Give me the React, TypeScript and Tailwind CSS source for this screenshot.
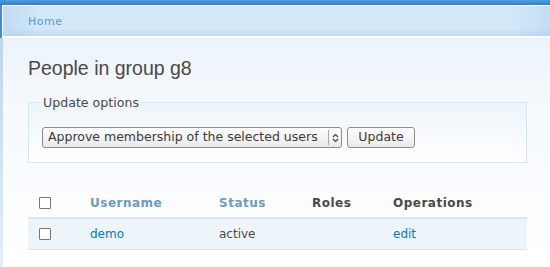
const rows = [{ name: "demo", status: "active", roles: "", op: "edit" }];

const cols = "grid grid-cols-[62px_129px_93px_81px_1fr]";

function Checkbox() {
	return <span className="block h-[12px] w-[12px] rounded-[1px] border border-[#777] bg-white" />;
}

export default function App() {
	return (
		<div className="flex h-[267px] w-[550px] flex-col overflow-hidden bg-white font-['DejaVu_Sans',sans-serif] text-[12px] text-[#494949]">
			<div className="h-[5px] bg-gradient-to-b from-[#4d9de2] to-[#2c80d2]" />
			<div className="flex h-[33px]">
				<div className="w-[2px] bg-[#3b8bd9]" />
				<div className="flex flex-1 border-t border-l border-b-2 border-white bg-[linear-gradient(90deg,#c0dbf2_0px,#d3e8f7_40px,#d3e8f7_510px,#bfdcf3_550px)]">
					<div className="flex flex-1 items-center bg-[linear-gradient(180deg,rgba(255,255,255,0)_75%,rgba(170,200,240,0.45)_100%)] pl-[25px] pt-[2px]">
						<a className="text-[11px] tracking-[0.5px] text-[#5799d3]">Home</a>
					</div>
				</div>
			</div>
			<div className="flex flex-1">
				<div className="w-[3px] bg-gradient-to-b from-[#bcd6ee] to-[#e4eef8]" />
				<div className="flex-1 bg-gradient-to-b from-[#ebf3fa] via-[#f6f9fd] via-30% to-white pl-[25px] pr-[20px]">
					<h2 className="mt-[18px] font-['Liberation_Sans',Arial,sans-serif] text-[19.5px] leading-[24px] text-[#494949]">
						People in group g8
					</h2>
					<fieldset className="mt-[16px] h-[67px] w-[499px] border border-[#d4e5f3] bg-gradient-to-b from-[#edf4fa] to-white px-[13px]">
						<legend className="px-[1px] text-[12.6px] leading-[13px] text-[#494949]">Update options</legend>
						<div className="mt-[18px] flex gap-[5px]">
							<div className="flex h-[21px] w-[300px] items-center rounded-[3px] border border-[#8c8c8c] bg-gradient-to-b from-white to-[#e9e9e9] text-[12.5px]">
								<span className="flex-1 pl-[5px] text-[#3a3a3a]">Approve membership of the selected users</span>
								<span className="h-[15px] w-px bg-[#a8a8a8]" />
								<span className="flex w-[12px] justify-center">
									<svg width="7" height="10" viewBox="0 0 7 10" fill="none" stroke="#444" strokeWidth="1.2">
										<path d="M1 4 L3.5 1.5 L6 4" />
										<path d="M1 6 L3.5 8.5 L6 6" />
									</svg>
								</span>
							</div>
							<button className="h-[21px] w-[68px] rounded-[3px] border border-[#8c8c8c] bg-gradient-to-b from-white to-[#e9e9e9] text-[12.5px] text-[#3a3a3a]">
								Update
							</button>
						</div>
					</fieldset>
					<div className="mt-[26px] w-[499px]">
						<div className={`${cols} h-[30px] items-center border-b-2 border-[#d3e7f4] font-bold tracking-[0.5px]`}>
							<span className="pl-[11px]"><Checkbox /></span>
							<span className="text-[#6b9ac4]">Username</span>
							<span className="text-[#6b9ac4]">Status</span>
							<span>Roles</span>
							<span>Operations</span>
						</div>
						{rows.map((r) => (
							<div key={r.name} className={`${cols} h-[31px] items-center border-b border-[#d3e7f4] bg-[#edf5fa]`}>
								<span className="pl-[11px]"><Checkbox /></span>
								<a className="text-[#027ac6]">{r.name}</a>
								<span>{r.status}</span>
								<span>{r.roles}</span>
								<a className="text-[#027ac6]">{r.op}</a>
							</div>
						))}
					</div>
				</div>
			</div>
		</div>
	);
}
